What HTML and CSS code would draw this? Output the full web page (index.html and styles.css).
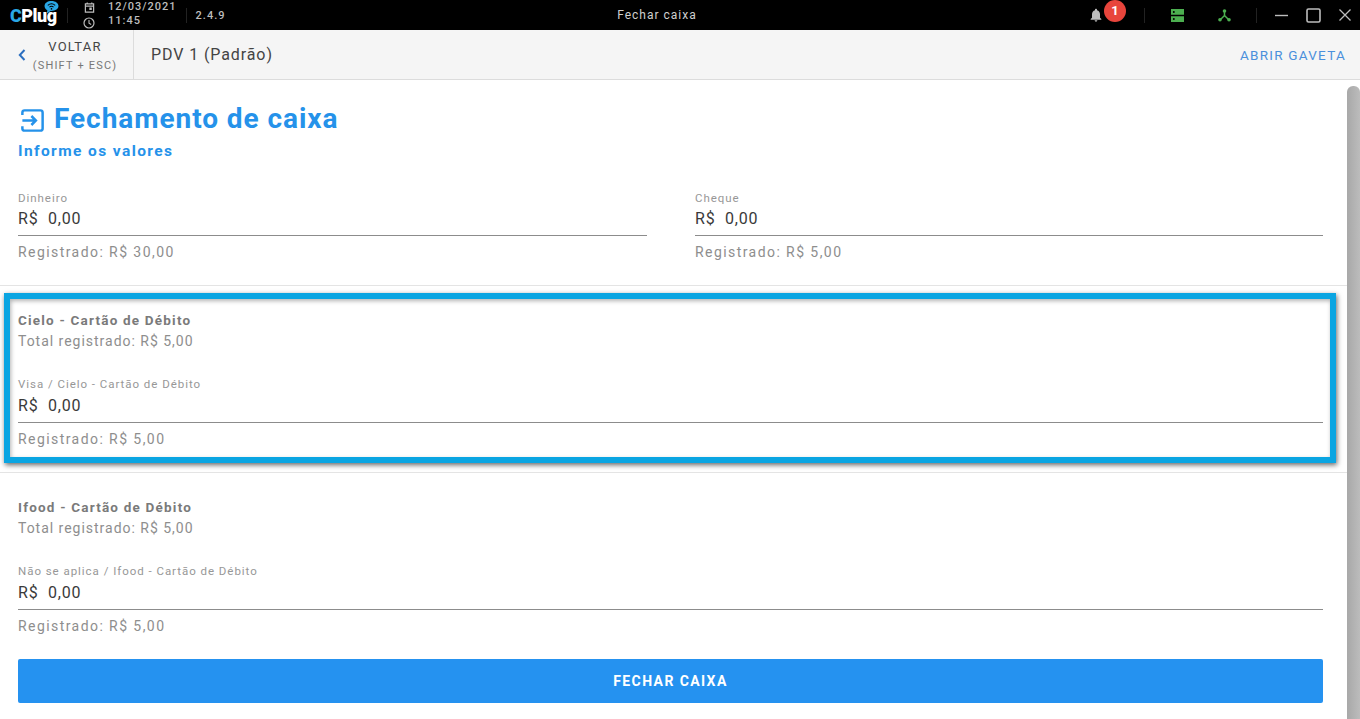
FILE: index.html
```html
<!DOCTYPE html>
<html lang="pt-BR">
<head>
<meta charset="UTF-8">
<title>Fechar caixa</title>
<link rel="stylesheet" href="styles.css">
</head>
<body>
<div class="topbar">
    <div class="tleft">
        <div class="logo">
            <span class="logo-text"><span class="logo-c">C</span>Plug</span>
            <svg class="logo-wifi" viewBox="0 0 16 14" width="15" height="13">
                <path d="M8 0C3.6 0 0.5 2.2 0.5 5.4c0 2 1.2 3.600 3 4.500L3 13.500l4-2.800h1c4.400 0 7.500-2.200 7.500-5.300S12.400 0 8 0z" fill="#2aa7e6"/>
                <path d="M4 4.800c2.300-2 5.700-2 8 0M5.800 6.600c1.300-1 3.100-1 4.400 0" fill="none" stroke="#000" stroke-width="1.100"/>
                <circle cx="8" cy="8.400" r="0.900" fill="#000"/>
            </svg>
        </div>
        <div class="tsep"></div>
        <div class="dicons">
            <svg viewBox="0 0 12 12" width="11" height="11"><path d="M1.500 2h9v9h-9zM1.500 4.500h9M3.500 0.500v2M8.500 0.500v2" fill="none" stroke="#bdbdbd" stroke-width="1.300"/><rect x="5.800" y="6" width="2.700" height="2.700" fill="#bdbdbd"/></svg>
            <svg viewBox="0 0 12 12" width="12" height="12"><circle cx="6" cy="6" r="5" fill="none" stroke="#bdbdbd" stroke-width="1.200"/><path d="M6 3v3.200l2.200 1.300" fill="none" stroke="#bdbdbd" stroke-width="1.100"/></svg>
        </div>
        <div class="dtime">
            <span>12/03/2021</span>
            <span>11:45</span>
        </div>
        <div class="tsep tsep-v"></div>
        <div class="version">2.4.9</div>
    </div>
    <div class="ttitle">Fechar caixa</div>
    <div class="tright">
        <div class="bell">
            <svg viewBox="0 0 24 24" width="16" height="16"><path d="M12 22c1.100 0 2-.9 2-2h-4c0 1.100.9 2 2 2zm6-6v-5c0-3.100-1.600-5.600-4.500-6.300V4c0-.8-.7-1.500-1.500-1.500s-1.500.7-1.500 1.500v.7C7.600 5.400 6 7.900 6 11v5l-2 2v1h16v-1l-2-2z" fill="#bdbdbd"/></svg>
            <span class="badge">1</span>
        </div>
        <div class="tsep tsep-a"></div>
        <svg class="ic-server" viewBox="0 0 13 13" width="13" height="13"><path d="M0 0h13v5.700H0zM0 7.300h13V13H0z" fill="#4caf50"/><circle cx="2.800" cy="2.900" r="1" fill="#000"/><circle cx="2.800" cy="10.100" r="1" fill="#000"/></svg>
        <svg class="ic-tree" viewBox="0 0 13 13" width="13" height="13"><path d="M6.500 2v4.500M6.500 6.500l-4 4M6.500 6.500l4 4" fill="none" stroke="#4caf50" stroke-width="1.500"/><circle cx="6.500" cy="2" r="1.800" fill="#4caf50"/><circle cx="2" cy="10.800" r="1.800" fill="#4caf50"/><circle cx="11" cy="10.800" r="1.800" fill="#4caf50"/></svg>
        <div class="tsep tsep-b"></div>
        <svg class="ic-min" viewBox="0 0 13 13" width="13" height="13"><path d="M0 6.500h13" stroke="#bdbdbd" stroke-width="1.400"/></svg>
        <svg class="ic-max" viewBox="0 0 15 15" width="15" height="15"><rect x="1" y="1" width="13" height="13" rx="1.500" fill="none" stroke="#bdbdbd" stroke-width="1.600"/></svg>
        <svg class="ic-close" viewBox="0 0 12 12" width="12" height="12"><path d="M0.500 0.500l11 11M11.500 0.500l-11 11" stroke="#bdbdbd" stroke-width="1.300"/></svg>
    </div>
</div>

<div class="subbar">
    <div class="back">
        <svg viewBox="0 0 8 12" width="8" height="12"><path d="M6.500 1L1.800 6l4.700 5" fill="none" stroke="#2b6fc0" stroke-width="2"/></svg>
        <div class="back-text">
            <span class="back-main">VOLTAR</span>
            <span class="back-sub">(SHIFT + ESC)</span>
        </div>
    </div>
    <div class="pdv">PDV 1 (Padrão)</div>
    <a class="gaveta">ABRIR GAVETA</a>
</div>

<div class="wrap">
    <div class="content">
        <div class="head">
            <h1>
                <svg viewBox="0 0 24 24" width="27" height="27"><path d="M3 12h12M11 8l4 4-4 4" fill="none" stroke="#2592ea" stroke-width="2.200"/><path d="M3 7V5c0-1.100.9-2 2-2h14c1.100 0 2 .9 2 2v14c0 1.100-.9 2-2 2H5c-1.100 0-2-.9-2-2v-2" fill="none" stroke="#2592ea" stroke-width="2.200"/></svg>
                Fechamento de caixa
            </h1>
            <h2>Informe os valores</h2>
        </div>

        <div class="section first">
            <div class="cols">
                <div class="field">
                    <label>Dinheiro</label>
                    <div class="value">R$&nbsp; 0,00</div>
                    <div class="reg">Registrado: R$ 30,00</div>
                </div>
                <div class="field">
                    <label>Cheque</label>
                    <div class="value">R$&nbsp; 0,00</div>
                    <div class="reg">Registrado: R$ 5,00</div>
                </div>
            </div>
        </div>

        <div class="section">
            <div class="highlight"></div>
            <div class="stitle">Cielo - Cartão de Débito</div>
            <div class="stotal">Total registrado: R$ 5,00</div>
            <div class="field">
                <label>Visa / Cielo - Cartão de Débito</label>
                <div class="value">R$&nbsp; 0,00</div>
                <div class="reg">Registrado: R$ 5,00</div>
            </div>
        </div>

        <div class="section last">
            <div class="stitle">Ifood - Cartão de Débito</div>
            <div class="stotal">Total registrado: R$ 5,00</div>
            <div class="field">
                <label>Não se aplica / Ifood - Cartão de Débito</label>
                <div class="value">R$&nbsp; 0,00</div>
                <div class="reg">Registrado: R$ 5,00</div>
            </div>
        </div>

        <button class="fechar">FECHAR CAIXA</button>
    </div>
    <div class="scroll"></div>
</div>
</body>
</html>
```

FILE: styles.css
```css
* {
    box-sizing: border-box;
}
html, body {
    margin: 0;
    height: 100%;
    overflow: hidden;
}
body {
    font-family: "Roboto", sans-serif;
    background-color: #fff;
    color: #333;
}

/* top bar */
.topbar {
    display: flex;
    align-items: center;
    justify-content: space-between;
    position: relative;
    height: 30px;
    background-color: #000;
    color: #bdbdbd;
}
.tleft, .tright {
    display: flex;
    align-items: center;
    height: 100%;
}
.logo {
    position: relative;
    width: 67px;
    padding-left: 10px;
}
.logo-text {
    display: block;
    font-size: 18px;
    font-weight: 900;
    letter-spacing: -0.5px;
    line-height: 30px;
    color: #fff;
    padding-top: 2px;
}
.logo-c {
    color: #2aa7e6;
}
.logo-wifi {
    position: absolute;
    left: 44px;
    top: 2px;
}
.tsep {
    width: 1px;
    height: 15px;
    background-color: #222;
}
.dicons {
    display: flex;
    flex-direction: column;
    align-items: center;
    gap: 4px;
    margin-left: 15px;
    width: 12px;
}
.dtime {
    display: flex;
    flex-direction: column;
    margin-left: 13px;
    margin-top: -2px;
    font-size: 11px;
    font-weight: 500;
    letter-spacing: 1px;
    line-height: 14px;
}
.tsep-v {
    margin-left: 9px;
}
.version {
    margin-left: 9px;
    font-size: 11px;
    font-weight: 500;
    letter-spacing: 1px;
}
.ttitle {
    position: absolute;
    left: 0;
    width: 1314px;
    text-align: center;
    font-size: 12px;
    letter-spacing: 1px;
    color: #cfcfcf;
}
.bell {
    position: relative;
    width: 16px;
    height: 16px;
}
.badge {
    position: absolute;
    left: 16px;
    top: -7px;
    width: 22px;
    height: 22px;
    border-radius: 50%;
    background-color: #e8453c;
    color: #fff;
    font-size: 13px;
    font-weight: 700;
    line-height: 21px;
    text-align: center;
}
.tsep-a {
    margin-left: 40px;
}
.ic-server {
    margin-left: 26px;
}
.ic-tree {
    margin-left: 34px;
}
.tsep-b {
    margin-left: 25px;
}
.ic-min {
    margin-left: 18px;
}
.ic-max {
    margin-left: 18px;
}
.ic-close {
    margin-left: 18px;
    margin-right: 9px;
}

/* back bar */
.subbar {
    display: flex;
    align-items: center;
    height: 50px;
    background-color: #f5f5f5;
    border-bottom: 1px solid #dcdcdc;
}
.back {
    display: flex;
    align-items: center;
    width: 134px;
    height: 100%;
    padding-left: 18px;
    border-right: 1px solid #dcdcdc;
}
.back svg {
    flex-shrink: 0;
}
.back-text {
    display: flex;
    flex-direction: column;
    align-items: center;
    margin-left: 6px;
    margin-top: 3px;
    width: 86px;
    white-space: nowrap;
}
.back-main {
    font-size: 13px;
    letter-spacing: 1.2px;
    line-height: 19px;
    color: #444;
}
.back-sub {
    font-size: 11px;
    letter-spacing: 1.2px;
    line-height: 19px;
    color: #777;
}
.pdv {
    margin-left: 17px;
    font-size: 16px;
    letter-spacing: 0.9px;
    color: #444;
}
.gaveta {
    margin-left: auto;
    margin-right: 14px;
    font-size: 13.500px;
    letter-spacing: 1.25px;
    color: #4a90dc;
}

/* page */
.wrap {
    display: flex;
    height: 639px;
}
.content {
    width: 1347px;
}
.scroll {
    width: 13px;
    margin-top: 6px;
    background: linear-gradient(to right, #a8a8a8, #bcbcbc);
    border-radius: 6px 6px 0 0;
}
.head {
    padding: 21px 0 0 18px;
    height: 88px;
}
h1 {
    display: flex;
    align-items: center;
    gap: 8px;
    margin: 0;
    height: 34px;
    font-size: 28px;
    font-weight: 700;
    letter-spacing: 0.95px;
    color: #2592ea;
}
h1 svg {
    margin: 4px 0 0 1px;
}
h2 {
    margin: 6px 0 0;
    font-size: 15.500px;
    font-weight: 700;
    letter-spacing: 1.4px;
    line-height: 20px;
    color: #2592ea;
}

.section {
    position: relative;
    padding: 27px 24px 0 18px;
    height: 187px;
    border-bottom: 1px solid #e4e4e4;
}
.section.first {
    height: 118px;
    padding-top: 22px;
}
.section.last {
    height: 186px;
    border-bottom: 0;
}
.cols {
    display: grid;
    grid-template-columns: 629px 628px;
    column-gap: 48px;
}
.stitle {
    font-size: 13.500px;
    font-weight: 700;
    letter-spacing: 1.2px;
    line-height: 20px;
    color: #7a7a7a;
    margin-top: -3px;
}
.stotal {
    font-size: 14px;
    letter-spacing: 0.98px;
    line-height: 20px;
    margin-top: 1px;
    margin-bottom: 25px;
    color: #8e8e8e;
}
.field label {
    display: block;
    font-size: 11.500px;
    letter-spacing: 0.96px;
    line-height: 16px;
    color: #979797;
}
.stotal + .field label {
    margin-bottom: 1px;
}
.value {
    height: 30px;
    padding-top: 3px;
    font-size: 16px;
    letter-spacing: 0.8px;
    line-height: 20px;
    color: #3a3a3a;
    border-bottom: 1px solid #8c8c8c;
}
.reg {
    margin-top: 6px;
    font-size: 14px;
    letter-spacing: 1.43px;
    line-height: 20px;
    color: #8e8e8e;
}
.highlight {
    position: absolute;
    left: 4px;
    top: 7px;
    width: 1332px;
    height: 170px;
    border: 6px solid #0aa5e2;
    box-shadow: 1px 2px 5px rgba(0, 0, 0, 0.6), inset 1px 2px 4px rgba(0, 0, 0, 0.3);
    pointer-events: none;
}
.fechar {
    display: block;
    width: 1305px;
    height: 44px;
    margin-left: 18px;
    border: 0;
    border-radius: 2px;
    background-color: #2592f0;
    color: #fff;
    font-family: "Roboto", sans-serif;
    font-size: 14px;
    font-weight: 700;
    letter-spacing: 1.4px;
}
```
